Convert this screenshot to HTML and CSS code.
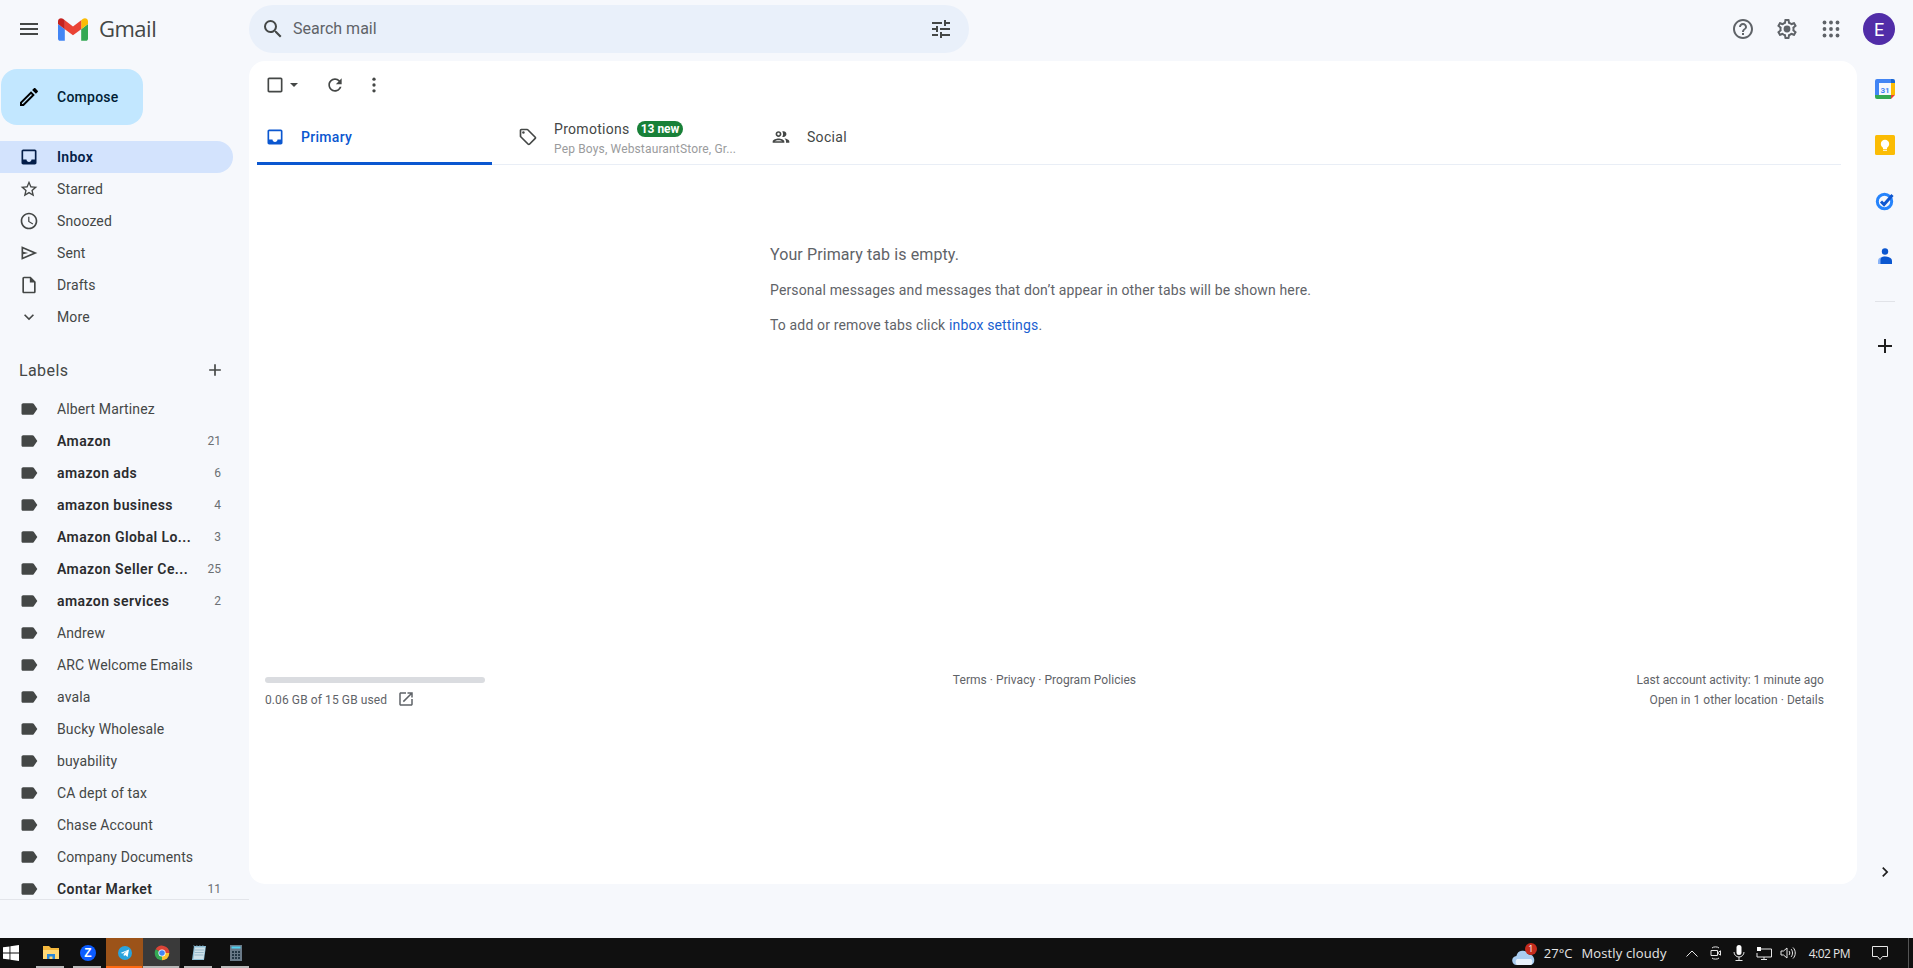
FILE: index.html
```html
<!DOCTYPE html>
<html lang="en">

<head>
  <meta charset="UTF-8" />
  <title>Inbox - Gmail</title>
  <link rel="stylesheet" href="styles.css">
</head>

<body>
  <svg class="defs" xmlns="http://www.w3.org/2000/svg">
    <symbol id="i-label" viewBox="0 0 24 24"><path d="M17.63 5.84C17.27 5.33 16.67 5 16 5L5 5.01C3.9 5.01 3 5.9 3 7v10c0 1.1.9 1.99 2 1.99L16 19c.67 0 1.27-.33 1.63-.84L22 12l-4.37-6.16z" /></symbol>
    <symbol id="i-inbox" viewBox="0 0 24 24"><path d="M19 3H5c-1.1 0-2 .9-2 2v14c0 1.1.9 2 2 2h14c1.1 0 2-.9 2-2V5c0-1.1-.9-2-2-2zm0 12h-4c0 1.66-1.35 3-3 3s-3-1.34-3-3H5V5h14v10z" /></symbol>
  </svg>

  <header class="topbar">
    <div class="brand">
      <svg class="menu-icon" viewBox="0 0 24 24"><path d="M3 18h18v-2H3v2zm0-5h18v-2H3v2zm0-7v2h18V6H3z" /></svg>
      <svg class="gmail-logo" viewBox="52 42 88 66">
        <path fill="#4285f4" d="M58 108h14V74L52 59v43c0 3.32 2.69 6 6 6" />
        <path fill="#34a853" d="M120 108h14c3.32 0 6-2.69 6-6V59l-20 15" />
        <path fill="#fbbc04" d="M120 48v26l20-15v-8c0-7.42-8.47-11.65-14.4-7.2" />
        <path fill="#ea4335" d="M72 74V48l24 18 24-18v26L96 92" />
        <path fill="#c5221f" d="M52 51v8l20 15V48l-5.6-4.2c-5.94-4.45-14.4-.22-14.4 7.2" />
      </svg>
      <span class="brand-name">Gmail</span>
    </div>

    <div class="search">
      <svg class="search-icon" viewBox="0 0 24 24"><path d="M15.5 14h-.79l-.28-.27A6.471 6.471 0 0 0 16 9.5 6.5 6.5 0 1 0 9.5 16c1.61 0 3.09-.59 4.23-1.57l.27.28v.79l5 4.99L20.49 19l-4.99-5zm-6 0C7.01 14 5 11.99 5 9.5S7.01 5 9.5 5 14 7.01 14 9.5 11.99 14 9.5 14z" /></svg>
      <span class="search-text">Search mail</span>
      <svg class="search-icon" viewBox="0 0 24 24"><path d="M3 17v2h6v-2H3zM3 5v2h10V5H3zm10 16v-2h8v-2h-8v-2h-2v6h2zM7 9v2H3v2h4v2h2V9H7zm14 4v-2H11v2h10zm-6-4h2V7h4V5h-4V3h-2v6z" /></svg>
    </div>

    <div class="top-actions">
      <svg class="top-icon" viewBox="0 0 24 24"><path d="M11 18h2v-2h-2v2zm1-16C6.48 2 2 6.48 2 12s4.48 10 10 10 10-4.48 10-10S17.52 2 12 2zm0 18c-4.41 0-8-3.59-8-8s3.59-8 8-8 8 3.59 8 8-3.59 8-8 8zm0-14c-2.21 0-4 1.79-4 4h2c0-1.1.9-2 2-2s2 .9 2 2c0 2-3 1.75-3 5h2c0-2.25 3-2.5 3-5 0-2.21-1.79-4-4-4z" /></svg>
      <svg class="top-icon" viewBox="0 0 24 24"><path d="M19.43 12.98c.04-.32.07-.64.07-.98 0-.34-.03-.66-.07-.98l2.11-1.65c.19-.15.24-.42.12-.64l-2-3.46a.5.5 0 0 0-.61-.22l-2.49 1c-.52-.4-1.08-.73-1.69-.98l-.38-2.65A.488.488 0 0 0 14 2h-4c-.25 0-.46.18-.49.42l-.38 2.65c-.61.25-1.17.59-1.69.98l-2.49-1a.566.566 0 0 0-.18-.03c-.17 0-.34.09-.43.25l-2 3.46c-.13.22-.07.49.12.64l2.11 1.65c-.04.32-.07.65-.07.98 0 .33.03.66.07.98l-2.11 1.65c-.19.15-.24.42-.12.64l2 3.46a.5.5 0 0 0 .61.22l2.49-1c.52.4 1.08.73 1.69.98l.38 2.65c.03.24.24.42.49.42h4c.25 0 .46-.18.49-.42l.38-2.65c.61-.25 1.17-.59 1.69-.98l2.49 1c.06.02.12.03.18.03.17 0 .34-.09.43-.25l2-3.46c.12-.22.07-.49-.12-.64l-2.11-1.65zm-1.98-1.71c.04.31.05.52.05.73 0 .21-.02.43-.05.73l-.14 1.13.89.7 1.08.84-.7 1.21-1.27-.51-1.04-.42-.9.68c-.43.32-.84.56-1.25.73l-1.06.43-.16 1.13-.2 1.35h-1.4l-.19-1.35-.16-1.13-1.06-.43c-.43-.18-.83-.41-1.23-.71l-.91-.7-1.06.43-1.27.51-.7-1.21 1.08-.84.89-.7-.14-1.13c-.03-.31-.05-.54-.05-.74s.02-.43.05-.73l.14-1.13-.89-.7-1.08-.84.7-1.21 1.27.51 1.04.42.9-.68c.43-.32.84-.56 1.25-.73l1.06-.43.16-1.13.2-1.35h1.39l.19 1.35.16 1.13 1.06.43c.43.18.83.41 1.23.71l.91.7 1.06-.43 1.27-.51.7 1.21-1.07.85-.89.7.14 1.13z" /><circle cx="12" cy="12" r="3.4" /></svg>
      <svg class="top-icon" viewBox="0 0 24 24">
        <circle cx="5.500" cy="5.500" r="1.900" /><circle cx="12" cy="5.500" r="1.900" /><circle cx="18.500" cy="5.500" r="1.900" />
        <circle cx="5.500" cy="12" r="1.900" /><circle cx="12" cy="12" r="1.900" /><circle cx="18.500" cy="12" r="1.900" />
        <circle cx="5.500" cy="18.500" r="1.900" /><circle cx="12" cy="18.500" r="1.900" /><circle cx="18.500" cy="18.500" r="1.900" />
      </svg>
      <div class="avatar">E</div>
    </div>
  </header>

  <div class="content">
    <aside class="sidebar">
      <div class="compose">
        <svg class="compose-icon" viewBox="0 0 24 24"><path d="M3 17.25V21h3.75L17.81 9.94l-3.75-3.75L3 17.25zM5.92 19H5v-.92l9.06-9.06.92.92L5.92 19zM20.71 5.63l-2.34-2.34c-.2-.2-.45-.29-.71-.29s-.51.1-.7.29l-1.83 1.83 3.75 3.75 1.83-1.83c.39-.39.39-1.02 0-1.41z" /></svg>
        <span>Compose</span>
      </div>

      <nav class="nav">
        <div class="row active"><svg class="row-icon"><use href="#i-inbox" /></svg><span class="row-name">Inbox</span></div>
        <div class="row"><svg class="row-icon" viewBox="0 0 24 24"><path d="M22 9.24l-7.19-.62L12 2 9.19 8.63 2 9.24l5.46 4.73L5.82 21 12 17.27 18.18 21l-1.63-7.03L22 9.24zM12 15.4l-3.76 2.27 1-4.28-3.32-2.88 4.38-.38L12 6.1l1.71 4.04 4.38.38-3.32 2.88 1 4.28L12 15.4z" /></svg><span class="row-name">Starred</span></div>
        <div class="row"><svg class="row-icon" viewBox="0 0 24 24"><path d="M11.99 2C6.47 2 2 6.48 2 12s4.47 10 9.99 10C17.52 22 22 17.52 22 12S17.52 2 11.99 2zM12 20c-4.42 0-8-3.58-8-8s3.58-8 8-8 8 3.58 8 8-3.58 8-8 8zm.5-13H11v6l5.25 3.15.75-1.23-4.5-2.67z" /></svg><span class="row-name">Snoozed</span></div>
        <div class="row"><svg class="row-icon" viewBox="0 0 24 24"><path d="M3 20V4l19 8-19 8zm2-3l11.850-5L5 7v3.500l6 1.500-6 1.500V17z" /></svg><span class="row-name">Sent</span></div>
        <div class="row"><svg class="row-icon" viewBox="0 0 24 24"><path d="M14 2H6c-1.1 0-1.99.9-1.99 2L4 20c0 1.1.89 2 1.99 2H18c1.1 0 2-.9 2-2V8l-6-6zM6 20V4h7v5h5v11H6z" /></svg><span class="row-name">Drafts</span></div>
        <div class="row"><svg class="row-icon" viewBox="0 0 24 24"><path d="M16.59 8.59L12 13.17 7.41 8.59 6 10l6 6 6-6z" /></svg><span class="row-name">More</span></div>
      </nav>

      <div class="labels-head">
        <span>Labels</span>
        <svg class="row-icon" viewBox="0 0 24 24"><path d="M19 13h-6v6h-2v-6H5v-2h6V5h2v6h6v2z" /></svg>
      </div>

      <div class="labels">
        <div class="row"><svg class="row-icon"><use href="#i-label" /></svg><span class="row-name">Albert Martinez</span></div>
        <div class="row unread"><svg class="row-icon"><use href="#i-label" /></svg><span class="row-name">Amazon</span><span class="count">21</span></div>
        <div class="row unread"><svg class="row-icon"><use href="#i-label" /></svg><span class="row-name">amazon ads</span><span class="count">6</span></div>
        <div class="row unread"><svg class="row-icon"><use href="#i-label" /></svg><span class="row-name">amazon business</span><span class="count">4</span></div>
        <div class="row unread"><svg class="row-icon"><use href="#i-label" /></svg><span class="row-name">Amazon Global Lo...</span><span class="count">3</span></div>
        <div class="row unread"><svg class="row-icon"><use href="#i-label" /></svg><span class="row-name">Amazon Seller Ce...</span><span class="count">25</span></div>
        <div class="row unread"><svg class="row-icon"><use href="#i-label" /></svg><span class="row-name">amazon services</span><span class="count">2</span></div>
        <div class="row"><svg class="row-icon"><use href="#i-label" /></svg><span class="row-name">Andrew</span></div>
        <div class="row"><svg class="row-icon"><use href="#i-label" /></svg><span class="row-name">ARC Welcome Emails</span></div>
        <div class="row"><svg class="row-icon"><use href="#i-label" /></svg><span class="row-name">avala</span></div>
        <div class="row"><svg class="row-icon"><use href="#i-label" /></svg><span class="row-name">Bucky Wholesale</span></div>
        <div class="row"><svg class="row-icon"><use href="#i-label" /></svg><span class="row-name">buyability</span></div>
        <div class="row"><svg class="row-icon"><use href="#i-label" /></svg><span class="row-name">CA dept of tax</span></div>
        <div class="row"><svg class="row-icon"><use href="#i-label" /></svg><span class="row-name">Chase Account</span></div>
        <div class="row"><svg class="row-icon"><use href="#i-label" /></svg><span class="row-name">Company Documents</span></div>
        <div class="row unread"><svg class="row-icon"><use href="#i-label" /></svg><span class="row-name">Contar Market</span><span class="count">11</span></div>
      </div>
    </aside>

    <main class="main">
      <div class="toolbar">
        <svg class="tool-check" viewBox="0 0 24 24"><path d="M19 5v14H5V5h14m0-2H5c-1.1 0-2 .9-2 2v14c0 1.1.9 2 2 2h14c1.1 0 2-.9 2-2V5c0-1.1-.9-2-2-2z" /></svg>
        <svg class="tool-caret" viewBox="0 0 10 5"><path d="M0 0l5 5 5-5z" /></svg>
        <svg class="tool-refresh" viewBox="0 0 24 24"><path d="M17.65 6.35C16.2 4.9 14.21 4 12 4c-4.42 0-7.99 3.58-7.99 8s3.57 8 7.99 8c3.73 0 6.84-2.55 7.73-6h-2.08c-.82 2.33-3.04 4-5.65 4-3.31 0-6-2.69-6-6s2.69-6 6-6c1.66 0 3.14.69 4.22 1.78L13 11h7V4l-2.35 2.35z" /></svg>
        <svg class="tool-more" viewBox="0 0 24 24"><circle cx="12" cy="5" r="2" /><circle cx="12" cy="12" r="2" /><circle cx="12" cy="19" r="2" /></svg>
      </div>

      <div class="tabs">
        <div class="tab tab-primary">
          <svg class="row-icon"><use href="#i-inbox" /></svg>
          <span>Primary</span>
        </div>
        <div class="tab tab-promo">
          <svg class="row-icon" viewBox="0 0 24 24"><path d="M21.41 11.58l-9-9C12.05 2.22 11.55 2 11 2H4c-1.1 0-2 .9-2 2v7c0 .55.22 1.05.59 1.42l9 9c.36.36.86.58 1.41.58.55 0 1.05-.22 1.41-.59l7-7c.37-.36.59-.86.59-1.41 0-.55-.23-1.06-.59-1.42zM13 20.01L4 11V4h7v-.01l9 9-7 7.02z" /><circle cx="6.5" cy="6.5" r="1.5" /></svg>
          <div class="tab-text">
            <div class="tab-title">Promotions <span class="chip">13 new</span></div>
            <div class="tab-sub">Pep Boys, WebstaurantStore, Gr...</div>
          </div>
        </div>
        <div class="tab tab-social">
          <svg class="row-icon" viewBox="0 0 24 24"><path d="M9 13.75c-2.34 0-7 1.17-7 3.5V19h14v-1.75c0-2.33-4.66-3.5-7-3.5zM4.34 17c.84-.58 2.87-1.25 4.66-1.25s3.82.67 4.66 1.25H4.34zM9 12c1.93 0 3.5-1.57 3.5-3.5S10.93 5 9 5 5.5 6.57 5.5 8.5 7.07 12 9 12zm0-5c.83 0 1.5.67 1.5 1.5S9.83 10 9 10s-1.5-.67-1.5-1.5S8.17 7 9 7zm7.04 6.81c1.16.84 1.96 1.96 1.96 3.44V19h4v-1.75c0-2.02-3.5-3.17-5.96-3.44zM15 12c1.93 0 3.5-1.57 3.5-3.5S16.93 5 15 5c-.54 0-1.04.13-1.5.35.63.89 1 1.98 1 3.15s-.37 2.26-1 3.15c.46.22.96.35 1.5.35z" /></svg>
          <span>Social</span>
        </div>
      </div>

      <div class="empty">
        <h2>Your Primary tab is empty.</h2>
        <p class="empty-line">Personal messages and messages that don’t appear in other tabs will be shown here.</p>
        <p class="empty-line last">To add or remove tabs click <span class="link">inbox settings</span>.</p>
      </div>

      <footer class="foot">
        <div class="storage">
          <div class="storage-bar"></div>
          <div class="storage-text">
            <span>0.06 GB of 15 GB used</span>
            <svg viewBox="0 0 24 24"><path d="M19 19H5V5h7V3H5c-1.11 0-2 .9-2 2v14c0 1.1.89 2 2 2h14c1.1 0 2-.9 2-2v-7h-2v7zM14 3v2h3.59l-9.83 9.83 1.41 1.41L19 6.41V10h2V3h-7z" /></svg>
          </div>
        </div>
        <div>Terms · Privacy · Program Policies</div>
        <div class="activity">
          <div>Last account activity: 1 minute ago</div>
          <div>Open in 1 other location · Details</div>
        </div>
      </footer>
    </main>

    <aside class="addons">
      <div class="addon">
        <svg class="addon-logo" viewBox="0 0 20 20">
          <path fill="#4285f4" d="M2 0h14v4H4v12H0V2a2 2 0 0 1 2-2z" />
          <path fill="#fbbc04" d="M16 4h4v12h-4z" />
          <path fill="#34a853" d="M0 16h16v4H2a2 2 0 0 1-2-2z" />
          <path fill="#1967d2" d="M16 0h2a2 2 0 0 1 2 2v2h-4z" />
          <path fill="#ea4335" d="M16 16h4l-4 4z" />
          <text x="10" y="13.5" class="cal-date">31</text>
        </svg>
      </div>
      <div class="addon">
        <svg class="addon-logo" viewBox="0 0 20 20">
          <rect width="20" height="20" rx="1.5" fill="#fbbc04" />
          <circle cx="10" cy="9" r="4.2" fill="#fff" />
          <path fill="#fff" d="M8 12h4v2H8zM8 14.8h4v1H8z" />
        </svg>
      </div>
      <div class="addon">
        <svg class="addon-logo" viewBox="0 0 20 20">
          <circle cx="9.5" cy="10.5" r="7.2" fill="none" stroke="#2684fc" stroke-width="3" />
          <path d="M6 10.5l3 3 8.5-9.5" fill="none" stroke="#0f57d0" stroke-width="3" />
        </svg>
      </div>
      <div class="addon">
        <svg class="addon-logo" viewBox="0 0 20 20">
          <circle cx="10" cy="4.5" r="3.2" fill="#0b57d0" />
          <path fill="#8ab4f8" d="M3 17v-3c0-3 3-4.5 7-4.5V17z" />
          <path fill="#0b57d0" d="M5.5 17v-4.5c0-2 2-3 4.5-3s7 1 7 4.5v3z" />
        </svg>
      </div>
      <div class="addon-line"></div>
      <svg class="addon-add" viewBox="0 0 24 24"><path d="M19 13h-6v6h-2v-6H5v-2h6V5h2v6h6v2z" /></svg>
      <svg class="addon-next" viewBox="0 0 24 24"><path d="M8.59 16.59L13.17 12 8.59 7.41 10 6l6 6-6 6z" /></svg>
    </aside>
  </div>

  <div class="taskbar">
    <svg class="start" viewBox="0 0 16 16">
      <path d="M0 2.3l6.5-.9v6.1H0zM7.4 1.3L16 0v7.5H7.4zM0 8.5h6.5v6.1L0 13.7zM7.4 8.5H16V16l-8.6-1.3z" />
    </svg>
    <div class="task open">
      <svg viewBox="0 0 16 16">
        <path fill="#f5b83d" d="M0 1h6l2 2h8v11H0z" />
        <path fill="#ffd976" d="M0 5h16v9H0z" />
        <path fill="#2b88d8" d="M4 9h8v5H9.5v-2.5h-3V14H4z" />
      </svg>
    </div>
    <div class="task open">
      <svg viewBox="0 0 16 16"><circle cx="8" cy="8" r="8" fill="#0b5cff" /><text x="8" y="12" class="task-z">Z</text></svg>
    </div>
    <div class="task open active-orange">
      <svg viewBox="0 0 16 16">
        <circle cx="8" cy="8" r="7" fill="#2aa3dc" />
        <path fill="#fff" d="M3.5 8l8.5-3.4-1.4 7.4-2.5-1.9-1.2 1.2-.3-2.4 3.8-3.3-4.6 2.9z" />
      </svg>
    </div>
    <div class="task open active-grey">
      <svg viewBox="0 0 24 24">
        <path fill="#db4437" d="M12 12L2.5 6.5A11 11 0 0 1 23 12z" />
        <path fill="#fbc02d" d="M12 12h11a11 11 0 0 1-11 11z" />
        <path fill="#34a853" d="M12 12v11A11 11 0 0 1 2.5 6.5z" />
        <circle cx="12" cy="12" r="5.4" fill="#fff" />
        <circle cx="12" cy="12" r="4.2" fill="#4285f4" />
      </svg>
    </div>
    <div class="task open">
      <svg viewBox="0 0 16 16">
        <path fill="#8fc0d8" d="M3 1h12l-2 14H1z" />
        <path fill="#cfe2ea" d="M4 2.500h10l-1.500 11.500H2.500z" />
        <path fill="none" stroke="#7fa7bc" stroke-width=".7" d="M3 1.500l-.2-1.500M6 1.500l-.2-1.500M9 1.500L8.800 0M12 1.500L11.800 0M4 5h9M3.700 7.500h9M3.400 10h9" />
      </svg>
    </div>
    <div class="task open">
      <svg viewBox="0 0 16 16">
        <rect x="2" y="0" width="12" height="16" fill="#6a7a88" />
        <rect x="3.500" y="1.500" width="9" height="2" fill="#4fd2f2" />
        <path fill="#233644" d="M4 6h2v2H4zM7 6h2v2H7zM10 6h2v2h-2zM4 9h2v2H4zM7 9h2v2H7zM10 9h2v2h-2zM4 12h2v2H4zM7 12h2v2H7zM10 12h2v2h-2z" />
      </svg>
    </div>

    <div class="tray">
      <div class="weather-icon">
        <svg viewBox="0 0 24 16"><path fill="#a9cdf0" d="M5 16a4.500 4.500 0 0 1-.6-9 6.500 6.500 0 0 1 12.300-1.500A5.500 5.500 0 0 1 19 16z" /><path fill="#e8f1fb" d="M5 16a4 4 0 0 1 0-6h14a4 4 0 0 1 0 6z" /></svg>
        <span class="weather-badge">1</span>
      </div>
      <span class="temp">27°C</span>
      <span class="sky">Mostly cloudy</span>
      <svg class="tray-chevron" viewBox="0 0 12 7"><path d="M.5 6.500L6 1l5.500 5.500" /></svg>
      <svg class="tray-video" viewBox="0 0 12 16"><path d="M2 3c1-1.500 6-1.500 7 0M2 13c1 1.500 6 1.500 7 0M1 5.500h6.500v5H1zM7.500 8l3-2.200v4.400z" /></svg>
      <svg class="tray-mic" viewBox="0 0 12 16"><rect x="3.500" y="0" width="5" height="10" rx="2.500" fill="#fff" stroke="none" /><path d="M1 7a5 5 0 0 0 10 0M6 12v3M2.500 15.500h7" /></svg>
      <svg class="tray-net" viewBox="0 0 16 14"><path d="M4 3h11.500v8H1V7M8 11v2.500M5 13.500h6" /><rect x="1" y="1" width="4" height="4" fill="#fff" stroke="none" /></svg>
      <svg class="tray-sound" viewBox="0 0 16 14"><path d="M1 5h2.500L7 2v10L3.500 9H1zM9 5c1 1 1 3 0 4M11 3c2 2 2 6 0 8M13 1.500c3 3 3 8 0 11" /></svg>
      <span class="clock">4:02 PM</span>
      <svg class="tray-note" viewBox="0 0 16 14"><path d="M.5.500h15v10h-5L8 13.500 5.500 10.500h-5z" /></svg>
      <div class="desk-peek"></div>
    </div>
  </div>
</body>

</html>
```

FILE: styles.css
```css
* {
  box-sizing: border-box;
}

body {
  margin: 0;
  height: 968px;
  overflow: hidden;
  background-color: #f6f8fc;
  font-family: Roboto, "Liberation Sans", sans-serif;
  font-size: 14px;
  color: #444746;
  display: flex;
  flex-direction: column;
}

svg {
  fill: currentColor;
  flex: none;
}

.defs {
  display: none;
}

/* top bar */

.topbar {
  height: 61px;
  display: flex;
  flex: none;
}

.brand {
  width: 249px;
  display: flex;
  align-items: center;
  padding: 0 0 3px 17px;
}

.menu-icon {
  width: 24px;
  height: 24px;
  margin-right: 17px;
}

.gmail-logo {
  width: 30px;
  height: 23px;
  margin-right: 11px;
}

.brand-name {
  font-family: "Open Sans", sans-serif;
  font-size: 22px;
  color: #444746;
  letter-spacing: -0.5px;
  padding-bottom: 2px;
}

.search {
  width: 720px;
  height: 48px;
  margin-top: 5px;
  border-radius: 24px;
  background-color: #e9f0fa;
  display: flex;
  align-items: center;
  padding: 0 16px 0 12px;
}

.search-icon {
  width: 24px;
  height: 24px;
}

.search-text {
  flex: 1;
  margin-left: 8px;
  padding-bottom: 1px;
  font-size: 16px;
  color: #5f6368;
}

.top-actions {
  margin-left: auto;
  display: flex;
  align-items: center;
  padding-right: 18px;
  height: 58px;
  color: #5f6368;
}

.top-icon {
  width: 24px;
  height: 24px;
  margin-right: 20px;
}

.avatar {
  width: 32px;
  height: 32px;
  border-radius: 50%;
  background-color: #512da8;
  color: #fff;
  font-size: 18px;
  display: flex;
  align-items: center;
  justify-content: center;
}

/* sidebar */

.content {
  flex: 1;
  display: flex;
  align-items: flex-start;
}

.sidebar {
  width: 249px;
  height: 839px;
  flex: none;
  overflow: hidden;
  border-bottom: 1px solid #e3e5ea;
}

.compose {
  width: 142px;
  height: 56px;
  margin: 8px 0 16px 1px;
  border-radius: 16px;
  background-color: #c2e7ff;
  color: #001d35;
  font-weight: 500;
  letter-spacing: 0.25px;
  display: flex;
  align-items: center;
  padding-left: 16px;
}

.compose-icon {
  width: 24px;
  height: 24px;
  margin-right: 16px;
  color: #000;
}

.row {
  width: 233px;
  height: 32px;
  display: flex;
  align-items: center;
  padding: 0 12px 0 19px;
  border-radius: 0 16px 16px 0;
  letter-spacing: 0.12px;
}

.row-icon {
  width: 20px;
  height: 20px;
}

.row-name {
  margin-left: 18px;
  white-space: nowrap;
}

.row.active {
  background-color: #d3e3fd;
  color: #041e49;
  font-weight: 600;
  letter-spacing: 0.3px;
}

.row.unread {
  font-weight: 600;
  color: #2b2c2e;
  letter-spacing: 0.42px;
}

.count {
  margin-left: auto;
  font-size: 12px;
  font-weight: 400;
  letter-spacing: 0;
  color: #6b6f73;
}

.labels .row-icon {
  color: #444746;
}

.labels-head {
  width: 233px;
  height: 60px;
  display: flex;
  align-items: center;
  justify-content: space-between;
  padding: 14px 8px 0 19px;
  font-size: 16px;
  letter-spacing: 0.4px;
}

/* main card */

.main {
  width: 1608px;
  height: 823px;
  flex: none;
  background-color: #fff;
  border-radius: 16px;
  padding-left: 8px;
  padding-right: 16px;
}

.toolbar {
  height: 48px;
  display: flex;
  align-items: center;
  padding-left: 8px;
}

.toolbar svg {
  color: #444746;
}

.tool-check {
  width: 20px;
  height: 20px;
}

.tool-caret {
  width: 8px;
  height: 4px;
  margin-left: 5px;
}

.tool-refresh {
  width: 20px;
  height: 20px;
  margin-left: 27px;
}

.tool-more {
  width: 20px;
  height: 20px;
  margin-left: 19px;
}

.tabs {
  height: 56px;
  display: flex;
  border-bottom: 1px solid #e9eef6;
}

.tab {
  height: 56px;
  display: flex;
  align-items: center;
  padding-top: 3px;
  border-bottom: 3px solid transparent;
  letter-spacing: 0.3px;
}

.tab > .row-icon {
  margin-right: 16px;
}

.tab-primary {
  width: 235px;
  padding-left: 8px;
  color: #0b57d0;
  font-weight: 500;
  border-bottom-color: #0b57d0;
  border-radius: 3px 3px 0 0;
}

.tab-promo {
  width: 253px;
  padding-left: 26px;
}

.tab-social {
  padding-left: 26px;
}

.tab-text {
  width: 182px;
}

.tab-title {
  height: 20px;
  white-space: nowrap;
  display: flex;
  align-items: center;
  gap: 7px;
}

.tab-sub {
  margin-top: 3px;
  font-size: 12px;
  letter-spacing: 0.15px;
  color: #9a9b9d;
  white-space: nowrap;
}

.chip {
  height: 16px;
  padding: 0 4px;
  border-radius: 8px;
  background-color: #188038;
  color: #fff;
  font-size: 12px;
  font-weight: 700;
  letter-spacing: 0;
  line-height: 16px;
}

.empty {
  padding: 80px 0 0 513px;
  color: #5f6368;
}

.empty h2 {
  margin: 0;
  font-size: 16px;
  font-weight: 400;
  line-height: 20px;
  letter-spacing: 0.1px;
}

.empty-line {
  margin: 15px 0 0;
  line-height: 20px;
  letter-spacing: 0.15px;
}

.empty-line.last {
  margin-top: 15px;
}

.link {
  color: #1a5fd0;
}

.foot {
  margin: 335px 17px 0 8px;
  display: grid;
  grid-template-columns: 1fr auto 1fr;
  font-size: 12px;
  line-height: 20px;
  letter-spacing: 0.05px;
  color: #5f6368;
}

.storage {
  padding-top: 7px;
}

.storage-bar {
  width: 220px;
  height: 6px;
  border-radius: 3px;
  background-color: #dadce0;
}

.storage-text {
  margin-top: 7px;
  display: flex;
  align-items: center;
  gap: 10px;
  letter-spacing: 0.1px;
}

.storage-text svg {
  width: 18px;
  height: 18px;
  margin-top: -2px;
}

.activity {
  text-align: right;
}

/* add-on panel */

.addons {
  width: 56px;
  height: 823px;
  flex: none;
  display: flex;
  flex-direction: column;
  align-items: center;
}

.addon {
  height: 56px;
  display: flex;
  align-items: center;
}

.addon-logo {
  width: 20px;
  height: 20px;
}

.cal-date {
  font-family: Roboto, sans-serif;
  font-size: 8px;
  font-weight: 700;
  fill: #4285f4;
  text-anchor: middle;
}

.addon-line {
  width: 20px;
  height: 1px;
  margin-top: 16px;
  background-color: #e1e3e8;
}

.addon-add {
  width: 24px;
  height: 24px;
  margin-top: 32px;
  color: #1f1f1f;
}

.addon-next {
  width: 20px;
  height: 20px;
  margin-top: auto;
  margin-bottom: 2px;
  color: #1f1f1f;
}

/* windows taskbar */

.taskbar {
  height: 30px;
  flex: none;
  background-color: #101010;
  display: flex;
  align-items: center;
  color: #e6e6e6;
  font-family: "Open Sans", "Noto Sans", sans-serif;
}

.start {
  width: 16px;
  height: 16px;
  margin: 0 13px 0 3px;
  color: #fff;
}

.task {
  width: 37px;
  height: 30px;
  position: relative;
  display: flex;
  align-items: center;
  justify-content: center;
}

.task svg {
  width: 16px;
  height: 16px;
}

.task::after {
  content: "";
  position: absolute;
  left: 4px;
  right: 5px;
  bottom: 0;
  height: 2px;
  background-color: #b9b9b9;
}

.task-z {
  font-family: "Liberation Sans", sans-serif;
  font-size: 12px;
  font-weight: 700;
  fill: #fff;
  text-anchor: middle;
}

.active-orange {
  background-color: #9c5319;
}

.active-orange::after {
  left: 0;
  right: 1px;
  background-color: #ff6a13;
}

.active-grey {
  background-color: #3a3a3a;
}

.active-grey::after {
  left: 0;
  right: 1px;
}

.tray {
  margin-left: auto;
  height: 30px;
  display: flex;
  align-items: center;
  font-size: 13px;
}

.tray svg {
  fill: none;
  stroke: #e6e6e6;
  stroke-width: 1;
}

.weather-icon {
  width: 24px;
  height: 30px;
  position: relative;
  display: flex;
  align-items: flex-end;
  padding-bottom: 3px;
}

.weather-icon svg {
  width: 24px;
  height: 16px;
  stroke: none !important;
}

.weather-badge {
  position: absolute;
  top: 5px;
  right: -1px;
  width: 12px;
  height: 12px;
  border-radius: 50%;
  background-color: #c42b1c;
  color: #fff;
  font-size: 9px;
  line-height: 12px;
  text-align: center;
}

.temp {
  margin-left: 8px;
}

.sky {
  margin-left: 9px;
  letter-spacing: 0.15px;
}

.tray-chevron {
  width: 12px;
  height: 7px;
  margin-left: 19px;
}

.tray-video {
  width: 12px;
  height: 16px;
  margin-left: 12px;
}

.tray-mic {
  width: 12px;
  height: 16px;
  margin-left: 11px;
}

.tray-net {
  width: 16px;
  height: 14px;
  margin-left: 11px;
}

.tray-sound {
  width: 16px;
  height: 14px;
  margin-left: 8px;
}

.clock {
  margin-left: 13px;
  font-size: 12px;
  letter-spacing: -0.5px;
}

.tray-note {
  width: 16px;
  height: 14px;
  margin-left: 22px;
}

.desk-peek {
  width: 1px;
  height: 30px;
  margin-left: 20px;
  margin-right: 4px;
  background-color: #555;
}
```
